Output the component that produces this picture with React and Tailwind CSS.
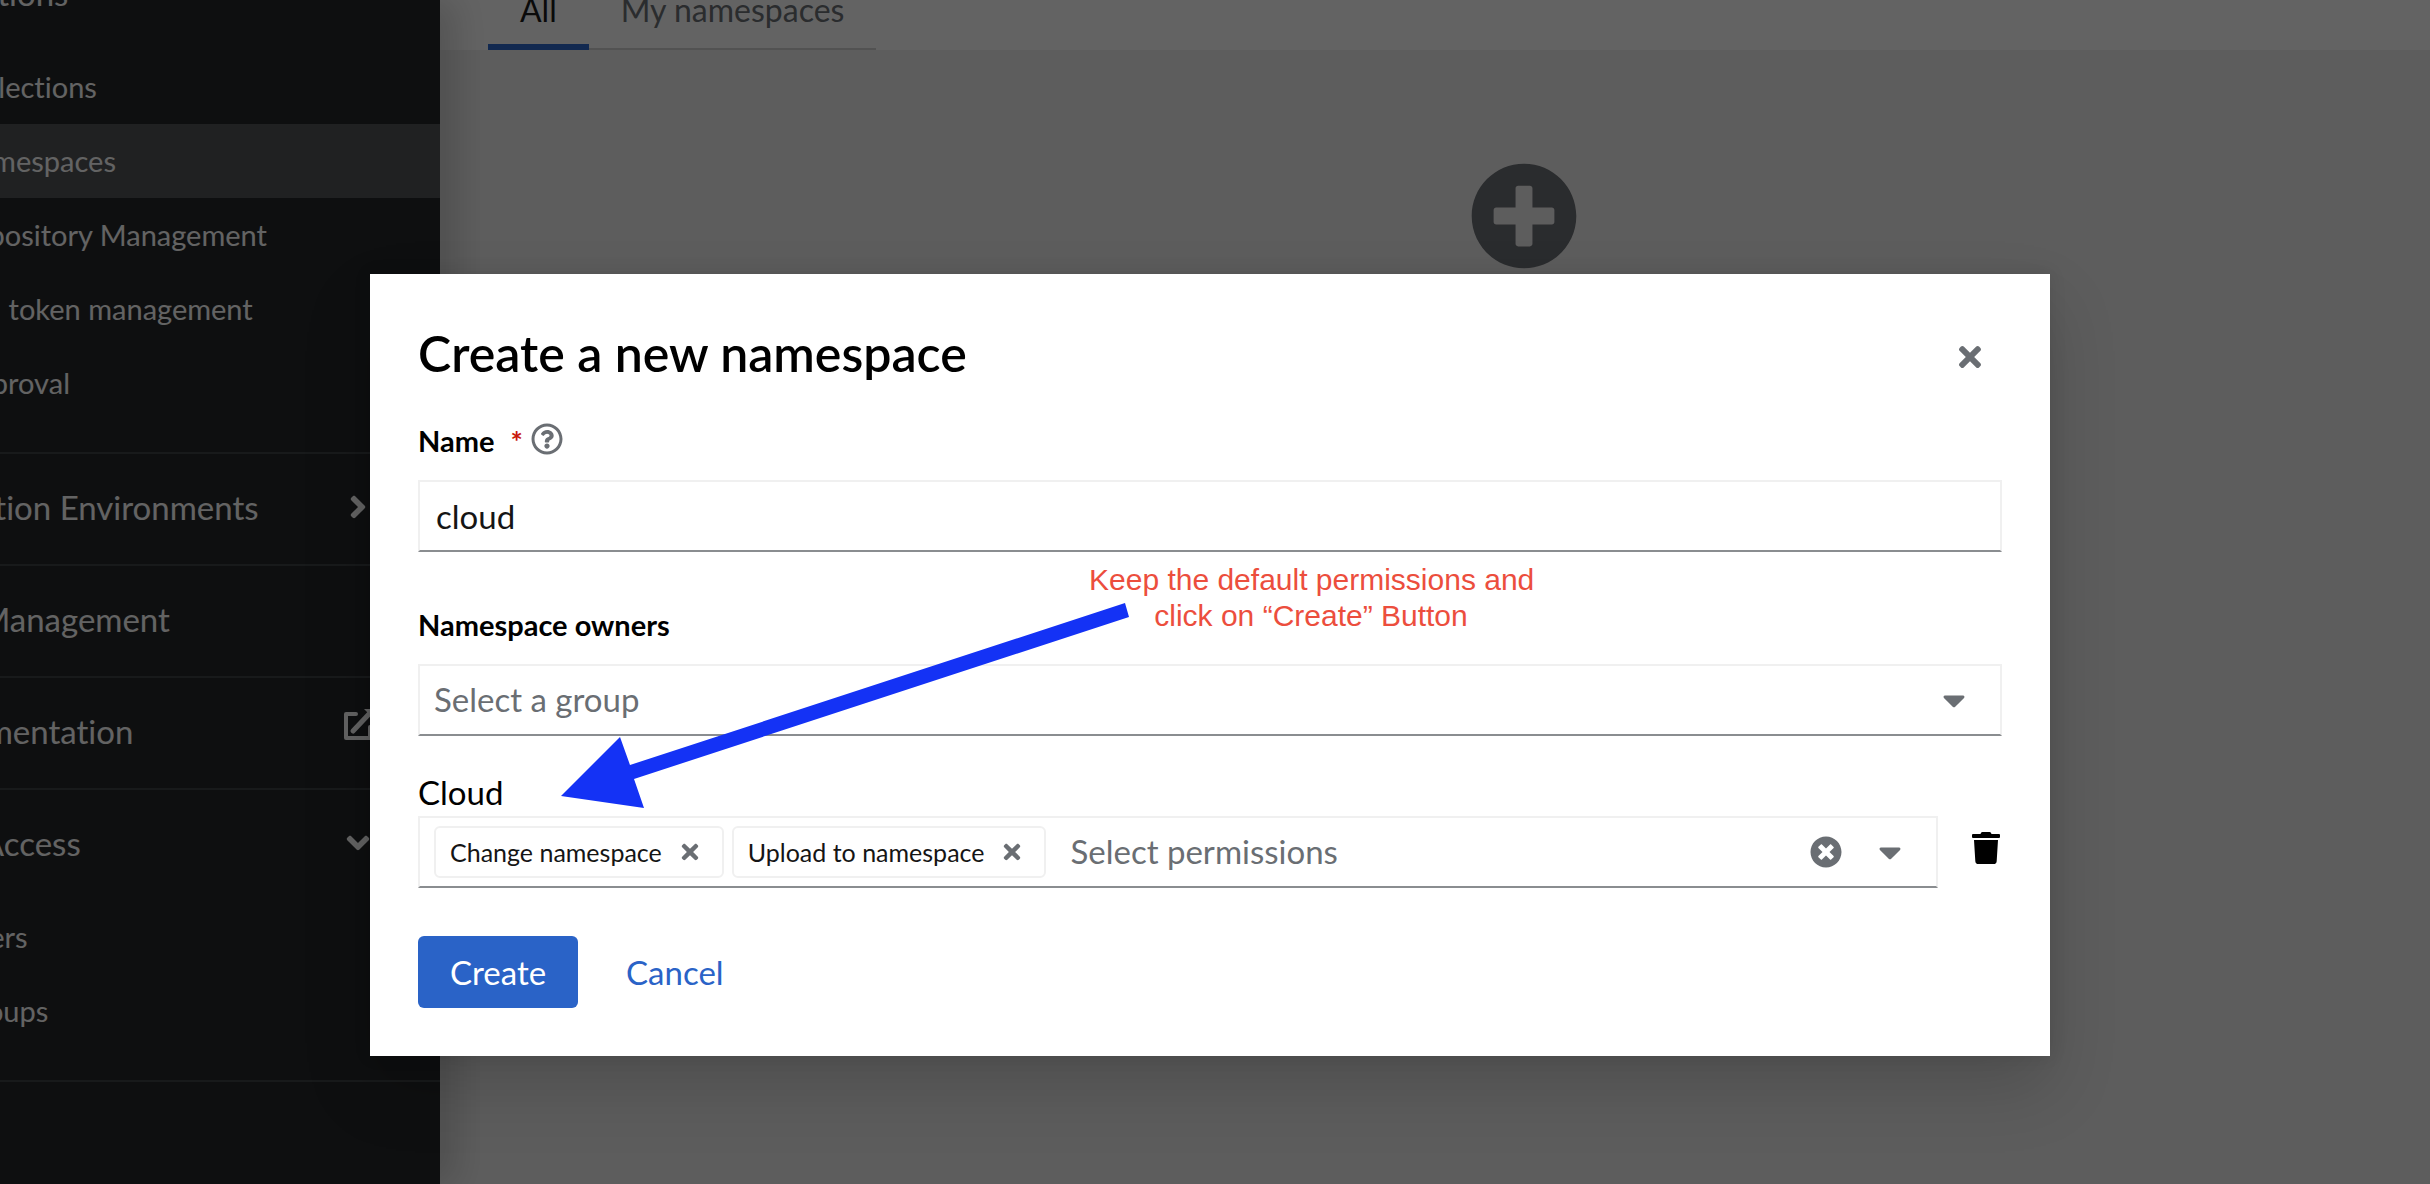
import React from "react";
import {
  FaAngleDown,
  FaAngleRight,
  FaCaretDown,
  FaPlusCircle,
  FaRegQuestionCircle,
  FaTimes,
  FaTimesCircle,
  FaTrash,
} from "react-icons/fa";

function ExternalLinkIcon() {
  return (
    <svg viewBox="0 0 36 36" className="mb-3 size-9" fill="none" stroke="currentColor" strokeWidth="4" strokeLinecap="round" aria-hidden="true">
      <path d="M16 7H6V31H30V20" strokeLinejoin="round" />
      <path d="M13 24L30 6" strokeWidth="5" />
      <path d="M24 2H35V13Z" fill="currentColor" stroke="none" />
    </svg>
  );
}

function SubItem({ label, active }) {
  return (
    <li>
      <a
        href="#"
        className={
          active
            ? "flex h-[74px] items-center bg-[#4f5255] pl-24 text-[29px] leading-[42px]"
            : "flex h-[74px] items-center pl-24 text-[29px] leading-[42px]"
        }
      >
        {label}
      </a>
    </li>
  );
}

function TopItem({ label, icon }) {
  return (
    <a href="#" className="flex h-[110px] items-center justify-between pr-16 pb-1 pl-12 text-[33px] leading-[48px]">
      <span>{label}</span>
      {icon}
    </a>
  );
}

function Sidebar() {
  return (
    <aside className="z-10 w-[440px] shrink-0 overflow-hidden bg-[#212427] text-white shadow-[16px_0_32px_rgba(3,3,3,0.16)]">
      <nav className="-mt-[60px] -ml-[140px]" aria-label="Main">
        <section className="border-b-2 border-[#3c3f42] pb-8">
          <TopItem label="Collections" />
          <ul>
            <SubItem label="Collections" />
            <SubItem label="Namespaces" active />
            <SubItem label="Repository Management" />
            <SubItem label="API token management" />
            <SubItem label="Approval" />
          </ul>
        </section>
        <section className="border-b-2 border-[#3c3f42]">
          <TopItem label="Execution Environments" icon={<FaAngleRight className="size-9" />} />
        </section>
        <section className="border-b-2 border-[#3c3f42]">
          <TopItem label="Task Management" />
        </section>
        <section className="border-b-2 border-[#3c3f42]">
          <TopItem label="Documentation" icon={<ExternalLinkIcon />} />
        </section>
        <section className="border-b-2 border-[#3c3f42] pb-8">
          <TopItem label="User Access" icon={<FaAngleDown className="size-9" />} />
          <ul>
            <SubItem label="Users" />
            <SubItem label="Groups" />
          </ul>
        </section>
      </nav>
    </aside>
  );
}

function MainArea() {
  return (
    <main className="flex flex-1 flex-col bg-[#f0f0f0]">
      <div className="flex h-[50px] items-end bg-white pl-12 text-[32px] leading-[32px]">
        <button type="button" className="border-b-[6px] border-[#2b66cc] px-8 pb-[18px] text-[#151515]">
          All
        </button>
        <button type="button" className="border-b-2 border-[#d2d2d2] px-8 pb-[22px] text-[#6a6e73]">
          My namespaces
        </button>
      </div>
      <div className="flex justify-center pt-28 pl-[178px]">
        <FaPlusCircle className="size-[108px] text-[#6a6e73]" />
      </div>
    </main>
  );
}

function Chip({ label }) {
  return (
    <span className="flex h-[52px] items-center gap-4 rounded-md border-2 border-[#f0f0f0] pr-5 pl-3.5 text-[25px] leading-8 text-[#151515]">
      {label}
      <button type="button" aria-label={"Remove " + label} className="text-[#6a6e73]">
        <FaTimes className="size-6" />
      </button>
    </span>
  );
}

function Annotation() {
  return (
    <>
      <p className="pointer-events-none absolute top-[288px] left-[719px] w-[444px] text-center font-['Liberation_Sans',sans-serif] text-[30px] leading-9 whitespace-nowrap text-[#ec4e3d]">
        Keep the default permissions and
        <br />
        click on “Create” Button
      </p>
      <svg viewBox="0 0 570 206" className="pointer-events-none absolute top-[329px] left-[191px] h-[206px] w-[570px]" aria-hidden="true">
        <path d="M0 193L59 134L69 162L564 0L568 14L73 176L83 205Z" fill="#1432f5" />
      </svg>
    </>
  );
}

function CreateDialog() {
  return (
    <div
      role="dialog"
      aria-modal="true"
      aria-labelledby="dialog-title"
      className="relative w-full max-w-[1680px] bg-white p-12 text-black shadow-[0_32px_64px_rgba(3,3,3,0.16),0_0_16px_rgba(3,3,3,0.1)]"
    >
      <header className="flex items-center justify-between">
        <h1 id="dialog-title" className="text-[50px] leading-[62px] font-semibold">
          Create a new namespace
        </h1>
        <button type="button" aria-label="Close" className="mt-2 mr-4 text-[#6a6e73]">
          <FaTimes className="size-8" />
        </button>
      </header>

      <form onSubmit={(e) => e.preventDefault()}>
        <div className="mt-9 flex items-center">
          <label htmlFor="name" className="text-[29px] leading-[42px] font-bold">
            Name
          </label>
          <span className="ml-4 text-[29px] leading-[42px] font-bold text-[#c9190b]" aria-hidden="true">
            *
          </span>
          <button type="button" aria-label="More info for name" className="mb-1 ml-2 text-[#6a6e73]">
            <FaRegQuestionCircle className="size-8" />
          </button>
        </div>
        <input
          id="name"
          defaultValue="cloud"
          className="mt-[18px] block h-[72px] w-full border-2 border-[#f0f0f0] border-b-[#8a8d90] px-4 text-[33px] text-[#151515] outline-none"
        />

        <label htmlFor="group" className="mt-[52px] block text-[29px] leading-[42px] font-bold">
          Namespace owners
        </label>
        <div className="mt-[18px] flex h-[72px] items-center border-2 border-[#f0f0f0] border-b-[#8a8d90] pr-7 pl-3.5">
          <input
            id="group"
            placeholder="Select a group"
            className="min-w-0 flex-1 text-[33px] outline-none placeholder:text-[#6a6e73]"
          />
          <button type="button" aria-label="Show groups" className="text-[#6a6e73]">
            <FaCaretDown className="size-9" />
          </button>
        </div>

        <label htmlFor="permissions" className="mt-8 block text-[33px] leading-[48px]">
          Cloud
        </label>
        <div className="flex items-center">
          <div className="flex h-[72px] flex-1 items-center border-2 border-[#f0f0f0] border-b-[#8a8d90] pr-7 pl-3.5">
            <div className="flex gap-2">
              <Chip label="Change namespace" />
              <Chip label="Upload to namespace" />
            </div>
            <input
              id="permissions"
              placeholder="Select permissions"
              className="ml-6 min-w-0 flex-1 text-[33px] outline-none placeholder:text-[#6a6e73]"
            />
            <button type="button" aria-label="Clear permissions" className="text-[#6a6e73]">
              <FaTimesCircle className="size-8" />
            </button>
            <button type="button" aria-label="Show permissions" className="ml-[30px] text-[#6a6e73]">
              <FaCaretDown className="size-9" />
            </button>
          </div>
          <button type="button" aria-label="Delete group" className="mb-2 ml-8">
            <FaTrash className="size-8" />
          </button>
        </div>

        <div className="mt-12 flex items-center text-[33px] leading-[48px]">
          <button type="submit" className="h-[72px] rounded-md bg-[#2a63c7] px-8 text-white">
            Create
          </button>
          <button type="button" className="h-[72px] px-12 text-[#2a63c7]">
            Cancel
          </button>
        </div>
      </form>
      <Annotation />
    </div>
  );
}

export default function App() {
  return (
    <div className="relative flex h-screen overflow-hidden font-['Lato',sans-serif] [font-variant-ligatures:none]">
      <Sidebar />
      <MainArea />
      <div className="absolute inset-0 z-20 flex items-start justify-center bg-[rgba(3,3,3,0.62)] pt-[274px] pr-2.5">
        <CreateDialog />
      </div>
    </div>
  );
}
